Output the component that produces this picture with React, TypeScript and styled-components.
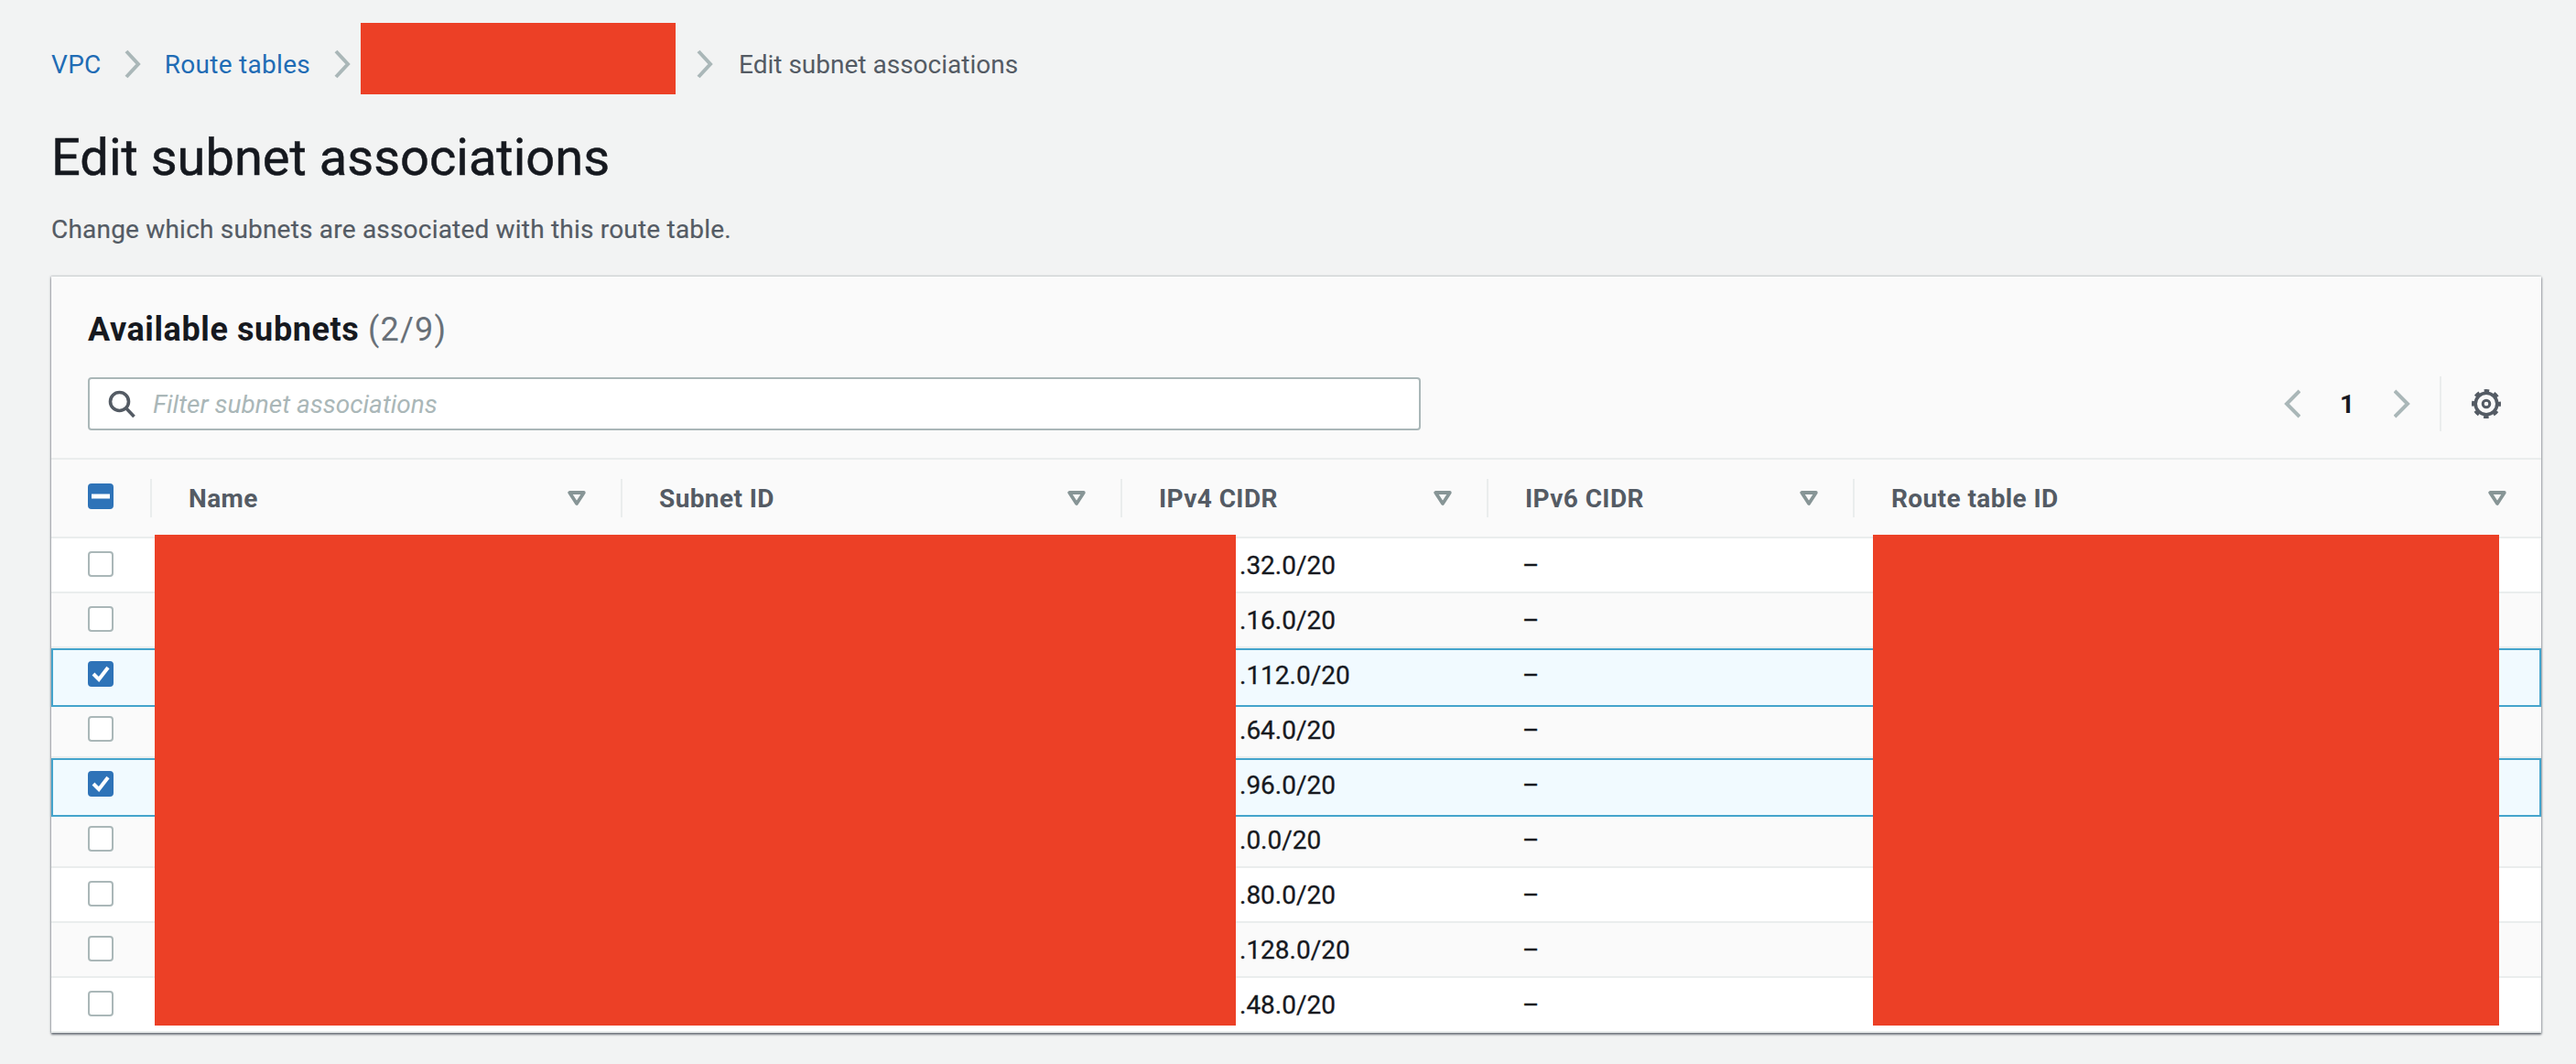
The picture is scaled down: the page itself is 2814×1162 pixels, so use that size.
import React from "react";
import styled, { createGlobalStyle } from "styled-components";

const Global = createGlobalStyle`
  html, body { margin: 0; padding: 0; background: #f2f3f3; }
  body { font-family: Roboto, "Noto Sans", sans-serif; color: #16191f; }
  * { box-sizing: border-box; }
`;

const Page = styled.div`
  width: 2814px;
  height: 1162px;
  padding: 25px 38px 0 56px;
  overflow: hidden;
`;

const Crumbs = styled.nav`
  display: flex;
  align-items: center;
  height: 90px;
  font-size: 28px;
`;
const CrumbLink = styled.a`
  color: #1f6cb5;
  letter-spacing: 0.3px;
`;
const CrumbCurrent = styled.span`
  color: #545b64;
`;
const CrumbSep = styled.svg<{ $l: number; $r: number }>`
  width: 20px;
  height: 32px;
  margin: 0 ${(p) => p.$r}px 0 ${(p) => p.$l}px;
  flex: none;
`;
const Redact = styled.div`
  width: 344px;
  height: 78px;
  margin-bottom: 12px;
  background: #ec4026;
  flex: none;
`;
const Title = styled.h1`
  margin: 23px 0 0;
  font-size: 56px;
  line-height: 68px;
  font-weight: 400;
  -webkit-text-stroke: 0.5px #16191f;
  color: #16191f;
`;
const Sub = styled.p`
  margin: 27px 0 0;
  font-size: 28px;
  line-height: 36px;
  letter-spacing: 0.2px;
  -webkit-text-stroke: 0.2px #545b64;
  color: #545b64;
`;

const Card = styled.section`
  position: relative;
  margin-top: 33px;
  width: 2720px;
  background: #fff;
  box-shadow: 0 2px 2px rgba(84, 91, 100, 0.75), 1px 1px 2px rgba(84, 91, 100, 0.3), -1px 0 2px rgba(84, 91, 100, 0.3), 0 -1px 2px rgba(0, 28, 36, 0.1);
`;
const Toolbar = styled.div`
  height: 200px;
  padding: 36px 40px 0;
  background: #fafafa;
  border-bottom: 2px solid #eaeded;
`;
const CardTitle = styled.h2`
  margin: 0;
  font-size: 36px;
  line-height: 44px;
  font-weight: 700;
  letter-spacing: 0.6px;
  color: #16191f;
`;
const Count = styled.span`
  font-weight: 400;
  letter-spacing: 1.2px;
  color: #687078;
`;
const ToolRow = styled.div`
  display: flex;
  align-items: center;
  margin-top: 29px;
`;
const Search = styled.div`
  display: flex;
  align-items: center;
  gap: 19px;
  width: 1456px;
  height: 58px;
  padding: 0 20px;
  background: #fff;
  border: 2px solid #aab7b8;
  border-radius: 4px;
`;
const Placeholder = styled.span`
  font-size: 28px;
  font-style: italic;
  color: #aab7b8;
`;
const Pager = styled.div`
  display: flex;
  align-items: center;
  margin-left: auto;
  height: 60px;
  padding-right: 4px;
`;
const PageNum = styled.span`
  width: 102px;
  text-align: center;
  font-size: 28px;
  font-weight: 700;
  color: #16191f;
`;
const PagerDivider = styled.span`
  width: 2px;
  height: 60px;
  background: #eaeded;
  margin: 0 33px 0 32px;
`;

const HeaderRow = styled.div`
  display: grid;
  grid-template-columns: 108px 514px 546px 400px 400px 1fr;
  height: 84px;
  background: #fafafa;
  align-items: center;
`;
const HeaderCell = styled.div`
  display: flex;
  align-items: center;
  justify-content: space-between;
  height: 42px;
  padding: 0 38px 0 40px;
  border-left: 2px solid #eaeded;
  font-size: 28px;
  font-weight: 700;
  letter-spacing: 0.4px;
  color: #545b64;
`;
const HeaderCheckCell = styled.div`
  padding: 0 0 4px 40px;
  display: flex;
`;

const Row = styled.div<{ $alt: boolean; $sel: boolean }>`
  position: relative;
  z-index: ${(p) => (p.$sel ? 1 : 0)};
  display: grid;
  grid-template-columns: 1298px 309px 1fr;
  height: 60px;
  align-items: center;
  background: ${(p) => (p.$alt ? "#fafafa" : "#fff")};
  border-top: 2px solid #eaeded;
  ${(p) =>
    p.$sel &&
    `&::before {
      content: "";
      position: absolute;
      top: 0;
      left: 0;
      right: 0;
      height: 60px;
      background: #f1faff;
      border: 2px solid #44a4cc;
    }`}
`;
const RowCap = styled.div`
  height: 2px;
  background: #eaeded;
`;
const CheckCell = styled.div`
  position: relative;
  padding: 0 0 2px 40px;
  display: flex;
`;
const ValueCell = styled.div`
  position: relative;
  font-size: 28px;
  -webkit-text-stroke: 0.3px #16191f;
  color: #16191f;
`;

const Box = styled.span<{ $on?: boolean }>`
  display: flex;
  align-items: center;
  justify-content: center;
  width: 28px;
  height: 28px;
  border-radius: 4px;
  border: 2px solid ${(p) => (p.$on ? "#2e73b8" : "#aab7b8")};
  background: ${(p) => (p.$on ? "#2e73b8" : "#fff")};
  flex: none;
`;
const Mask = styled.div<{ $left: number; $width: number }>`
  position: absolute;
  top: 282px;
  left: ${(p) => p.$left}px;
  width: ${(p) => p.$width}px;
  height: 536px;
  background: #ec4026;
  z-index: 2;
`;

const Chevron = ({ l, r }: { l: number; r: number }) => (
  <CrumbSep $l={l} $r={r} viewBox="0 0 20 32">
    <path d="M3 2l13 14L3 30" fill="none" stroke="#aab7b8" strokeWidth="4" />
  </CrumbSep>
);

const FilterIcon = () => (
  <svg width="20" height="16" viewBox="0 0 20 16">
    <path d="M2.2 2h15.6L10 14z" fill="none" stroke="#879596" strokeWidth="3.8" strokeLinejoin="round" />
  </svg>
);

const PageArrow = ({ left }: { left?: boolean }) => (
  <svg width="18" height="32" viewBox="0 0 18 32">
    <path d={left ? "M17 2L3 16l14 14" : "M1 2l14 14L1 30"} fill="none" stroke="#aab7b8" strokeWidth="4" />
  </svg>
);

const Gear = () => (
  <svg width="32" height="32" viewBox="0 0 32 32">
    <g fill="none" stroke="#545b64">
      <circle cx="16" cy="16" r="3.8" strokeWidth="3" />
      <circle cx="16" cy="16" r="11.8" strokeWidth="3.6" />
      <circle cx="16" cy="16" r="14.4" strokeWidth="3.2" strokeDasharray="5.6 5.71" strokeDashoffset="2.8" />
    </g>
  </svg>
);

const SearchIcon = () => (
  <svg width="30" height="30" viewBox="0 0 30 30">
    <circle cx="12.5" cy="12.5" r="10" fill="none" stroke="#545b64" strokeWidth="3.6" />
    <path d="M19.5 19.5L28.5 29" stroke="#545b64" strokeWidth="3.6" fill="none" />
  </svg>
);

const cidrs = [".32.0/20", ".16.0/20", ".112.0/20", ".64.0/20", ".96.0/20", ".0.0/20", ".80.0/20", ".128.0/20", ".48.0/20"];
const selected = [2, 4];
const columns = ["Name", "Subnet ID", "IPv4 CIDR", "IPv6 CIDR", "Route table ID"];

export default function App() {
  return (
    <Page>
      <Global />
      <Crumbs>
        <CrumbLink>VPC</CrumbLink>
        <Chevron l={24} r={25} />
        <CrumbLink>Route tables</CrumbLink>
        <Chevron l={25} r={10} />
        <Redact />
        <Chevron l={22} r={27} />
        <CrumbCurrent>Edit subnet associations</CrumbCurrent>
      </Crumbs>
      <Title>Edit subnet associations</Title>
      <Sub>Change which subnets are associated with this route table.</Sub>
      <Card>
        <Toolbar>
          <CardTitle>
            Available subnets <Count>(2/9)</Count>
          </CardTitle>
          <ToolRow>
            <Search>
              <SearchIcon />
              <Placeholder>Filter subnet associations</Placeholder>
            </Search>
            <Pager>
              <PageArrow left />
              <PageNum>1</PageNum>
              <PageArrow />
              <PagerDivider />
              <Gear />
            </Pager>
          </ToolRow>
        </Toolbar>
        <HeaderRow>
          <HeaderCheckCell>
            <Box $on>
              <svg width="20" height="6" viewBox="0 0 20 6">
                <rect width="20" height="5" y="0.5" fill="#fff" />
              </svg>
            </Box>
          </HeaderCheckCell>
          {columns.map((c) => (
            <HeaderCell key={c}>
              {c}
              <FilterIcon />
            </HeaderCell>
          ))}
        </HeaderRow>
        {cidrs.map((c, i) => {
          const sel = selected.includes(i);
          return (
            <Row key={c} $alt={i % 2 === 1} $sel={sel}>
              <CheckCell>
                <Box $on={sel}>
                  {sel && (
                    <svg width="22" height="20" viewBox="0 0 22 20">
                      <path d="M3 10l6 6L19 3" fill="none" stroke="#fff" strokeWidth="4" />
                    </svg>
                  )}
                </Box>
              </CheckCell>
              <ValueCell>{c}</ValueCell>
              <ValueCell>–</ValueCell>
            </Row>
          );
        })}
        <RowCap />
        <Mask $left={113} $width={1181} />
        <Mask $left={1990} $width={684} />
      </Card>
    </Page>
  );
}
